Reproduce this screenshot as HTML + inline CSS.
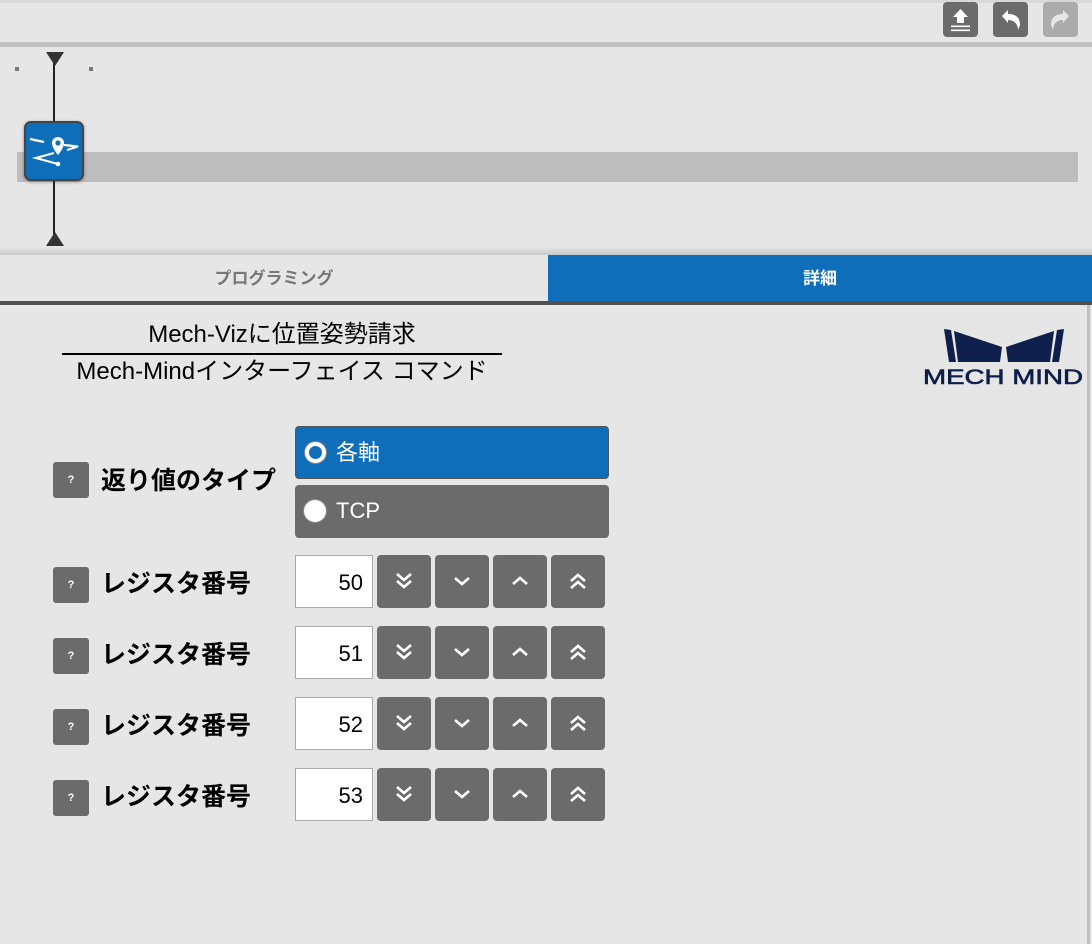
<!DOCTYPE html>
<html><head><meta charset="utf-8"><style>
*{margin:0;padding:0;box-sizing:border-box}
body{width:1092px;height:944px;background:#e6e6e6;position:relative;overflow:hidden;font-family:"Liberation Sans","Noto Sans CJK JP",sans-serif}
.a{position:absolute}
.tb{width:35px;height:35px;border-radius:4px;background:#6b6b6b;top:2px}
.help{left:53px;width:36px;height:36px;background:#6b6b6b;border-radius:3px;color:#fff;font-size:11px;font-weight:bold;text-align:center;line-height:36px}
.lbl{left:101px;font-size:25px;font-weight:bold;color:#000;line-height:30px;white-space:nowrap}
.inp{left:295px;width:78px;height:53px;background:#fff;border:1px solid #aaa;text-align:right;padding-right:9px;font-size:22px;line-height:53px;color:#000}
.btn{width:54px;height:53px;background:#6b6b6b;border-radius:4px}
.btn svg{position:absolute;left:17px;top:16px}
</style></head><body>
<div class="a" style="left:0;top:0;width:1092px;height:3px;background:#d8d8d8"></div>
<div class="a tb" style="left:943px"><svg width="35" height="35"><path d="M17.5 7 L25 15 H21 V21 H14 V15 H10 Z" fill="#fff"/><rect x="8" y="23.5" width="19" height="1.6" fill="#fff"/><rect x="8" y="27.5" width="19" height="1.6" fill="#fff"/></svg></div>
<div class="a tb" style="left:993px"><svg width="35" height="35"><path d="M9 14 L15 8 V12 C22 12 27 15 27 23 L25 28 C25 22 21 18 15 18 V21 Z" fill="#fff"/></svg></div>
<div class="a tb" style="left:1043px;background:#ababab"><svg width="35" height="35"><path d="M26 14 L20 8 V12 C13 12 8 15 8 23 L10 28 C10 22 14 18 20 18 V21 Z" fill="#e6e6e6"/></svg></div>
<div class="a" style="left:0;top:42px;width:1092px;height:5px;background:#c0c0c0"></div>
<div class="a" style="left:17px;top:152px;width:1061px;height:30px;background:#bdbdbd"></div>
<div class="a" style="left:15px;top:67px;width:4px;height:4px;background:#777"></div>
<div class="a" style="left:89px;top:67px;width:4px;height:4px;background:#777"></div>
<div class="a" style="left:53px;top:60px;width:2px;height:178px;background:#222"></div>
<svg class="a" style="left:45px;top:52px" width="20" height="16"><path d="M1 0 H19 L10 14Z" fill="#333"/></svg>
<svg class="a" style="left:45px;top:231px" width="20" height="15"><path d="M1 15 H19 L10 1Z" fill="#333"/></svg>
<div class="a" style="left:24px;top:121px;width:60px;height:60px;background:#0f6eb9;border:2px solid #444;border-radius:7px;box-shadow:0 1px 3px rgba(0,0,0,.4)"><svg width="56" height="56" style="position:absolute;left:0;top:0"><path d="M4 16 L18 19 M38 22 L52 23.5 L41 27 M28 30 L10 35 L32 41" stroke="#fff" stroke-width="2.2" fill="none"/><path d="M32 14 a6 6 0 0 1 6 6 c0 5 -6 12 -6 12 c0 0 -6 -7 -6 -12 a6 6 0 0 1 6 -6z" fill="#fff"/><circle cx="32" cy="20" r="2.6" fill="#0f6eb9"/><circle cx="32" cy="41" r="2.3" fill="#fff"/></svg></div>
<div class="a" style="left:0;top:247px;width:1092px;height:8px;background:linear-gradient(#e6e6e6,#c8c8c8)"></div>
<div class="a" style="left:0;top:255px;width:548px;height:46px;background:#e6e6e6;color:#777;font-weight:bold;font-size:17px;text-align:center;line-height:48px">プログラミング</div>
<div class="a" style="left:548px;top:255px;width:544px;height:46px;background:#0f6eb9;color:#fff;font-weight:bold;font-size:17px;text-align:center;line-height:48px">詳細</div>
<div class="a" style="left:0;top:301px;width:1092px;height:4px;background:#505050"></div>
<div class="a" style="left:1087px;top:305px;width:3px;height:639px;background:#c0c0c0"></div>
<div class="a" style="left:22px;top:320px;width:520px;text-align:center;font-size:24px;line-height:30px;color:#000">Mech-Vizに位置姿勢請求</div>
<div class="a" style="left:62px;top:353px;width:440px;height:2px;background:#000"></div>
<div class="a" style="left:22px;top:357px;width:520px;text-align:center;font-size:24px;line-height:30px;color:#000">Mech-Mindインターフェイス コマンド</div>
<svg class="a" style="left:920px;top:325px" width="172" height="64"><g fill="#0d1f4a"><path d="M24 4 L31 5 L36 37 H29Z"/><path d="M34 6 L82 22 L80 37 H38Z"/><path d="M144 4 L137 5 L132 37 H139Z"/><path d="M134 6 L86 22 L88 37 H130Z"/></g><text x="3" y="59" font-family="Liberation Sans,sans-serif" font-size="21" fill="#0d1f4a" stroke="#0d1f4a" stroke-width="0.6" textLength="160" lengthAdjust="spacingAndGlyphs">MECH MIND</text></svg>
<div class="a help" style="top:462px">?</div>
<div class="a lbl" style="top:466px">返り値のタイプ</div>
<div class="a" style="left:295px;top:426px;width:314px;height:53px;background:#0f6eb9;border:1px solid #555;border-radius:4px;color:#fff;font-size:22px;line-height:51px;padding-left:40px">各軸<div class="a" style="left:9px;top:15px;width:21px;height:21px;border-radius:50%;border:4px solid #fff;background:#0f6eb9;box-shadow:0 0 0 1px #888"></div></div>
<div class="a" style="left:295px;top:485px;width:314px;height:53px;background:#6b6b6b;border-radius:4px;color:#fff;font-size:22px;line-height:51px;padding-left:41px">TCP<div class="a" style="left:9px;top:15px;width:22px;height:22px;border-radius:50%;background:#fff;box-shadow:0 0 0 1px #888"></div></div>

<div class="a help" style="top:567px">?</div><div class="a lbl" style="top:569px">レジスタ番号</div><div class="a inp" style="top:555px">50</div>
<div class="a help" style="top:638px">?</div><div class="a lbl" style="top:640px">レジスタ番号</div><div class="a inp" style="top:626px">51</div>
<div class="a help" style="top:709px">?</div><div class="a lbl" style="top:711px">レジスタ番号</div><div class="a inp" style="top:697px">52</div>
<div class="a help" style="top:780px">?</div><div class="a lbl" style="top:782px">レジスタ番号</div><div class="a inp" style="top:768px">53</div>

<div class="a btn" style="left:377px;top:555px"><svg width="20" height="20"><path d="M3 3 L10 9 L17 3 M3 10 L10 16 L17 10" stroke="#fff" stroke-width="2.6" fill="none"/></svg></div>
<div class="a btn" style="left:435px;top:555px"><svg width="20" height="20"><path d="M3 7 L10 13 L17 7" stroke="#fff" stroke-width="2.6" fill="none"/></svg></div>
<div class="a btn" style="left:493px;top:555px"><svg width="20" height="20"><path d="M3 13 L10 7 L17 13" stroke="#fff" stroke-width="2.6" fill="none"/></svg></div>
<div class="a btn" style="left:551px;top:555px"><svg width="20" height="20"><path d="M3 10 L10 4 L17 10 M3 17 L10 11 L17 17" stroke="#fff" stroke-width="2.6" fill="none"/></svg></div>

<div class="a btn" style="left:377px;top:626px"><svg width="20" height="20"><path d="M3 3 L10 9 L17 3 M3 10 L10 16 L17 10" stroke="#fff" stroke-width="2.6" fill="none"/></svg></div>
<div class="a btn" style="left:435px;top:626px"><svg width="20" height="20"><path d="M3 7 L10 13 L17 7" stroke="#fff" stroke-width="2.6" fill="none"/></svg></div>
<div class="a btn" style="left:493px;top:626px"><svg width="20" height="20"><path d="M3 13 L10 7 L17 13" stroke="#fff" stroke-width="2.6" fill="none"/></svg></div>
<div class="a btn" style="left:551px;top:626px"><svg width="20" height="20"><path d="M3 10 L10 4 L17 10 M3 17 L10 11 L17 17" stroke="#fff" stroke-width="2.6" fill="none"/></svg></div>

<div class="a btn" style="left:377px;top:697px"><svg width="20" height="20"><path d="M3 3 L10 9 L17 3 M3 10 L10 16 L17 10" stroke="#fff" stroke-width="2.6" fill="none"/></svg></div>
<div class="a btn" style="left:435px;top:697px"><svg width="20" height="20"><path d="M3 7 L10 13 L17 7" stroke="#fff" stroke-width="2.6" fill="none"/></svg></div>
<div class="a btn" style="left:493px;top:697px"><svg width="20" height="20"><path d="M3 13 L10 7 L17 13" stroke="#fff" stroke-width="2.6" fill="none"/></svg></div>
<div class="a btn" style="left:551px;top:697px"><svg width="20" height="20"><path d="M3 10 L10 4 L17 10 M3 17 L10 11 L17 17" stroke="#fff" stroke-width="2.6" fill="none"/></svg></div>

<div class="a btn" style="left:377px;top:768px"><svg width="20" height="20"><path d="M3 3 L10 9 L17 3 M3 10 L10 16 L17 10" stroke="#fff" stroke-width="2.6" fill="none"/></svg></div>
<div class="a btn" style="left:435px;top:768px"><svg width="20" height="20"><path d="M3 7 L10 13 L17 7" stroke="#fff" stroke-width="2.6" fill="none"/></svg></div>
<div class="a btn" style="left:493px;top:768px"><svg width="20" height="20"><path d="M3 13 L10 7 L17 13" stroke="#fff" stroke-width="2.6" fill="none"/></svg></div>
<div class="a btn" style="left:551px;top:768px"><svg width="20" height="20"><path d="M3 10 L10 4 L17 10 M3 17 L10 11 L17 17" stroke="#fff" stroke-width="2.6" fill="none"/></svg></div>
</body></html>
